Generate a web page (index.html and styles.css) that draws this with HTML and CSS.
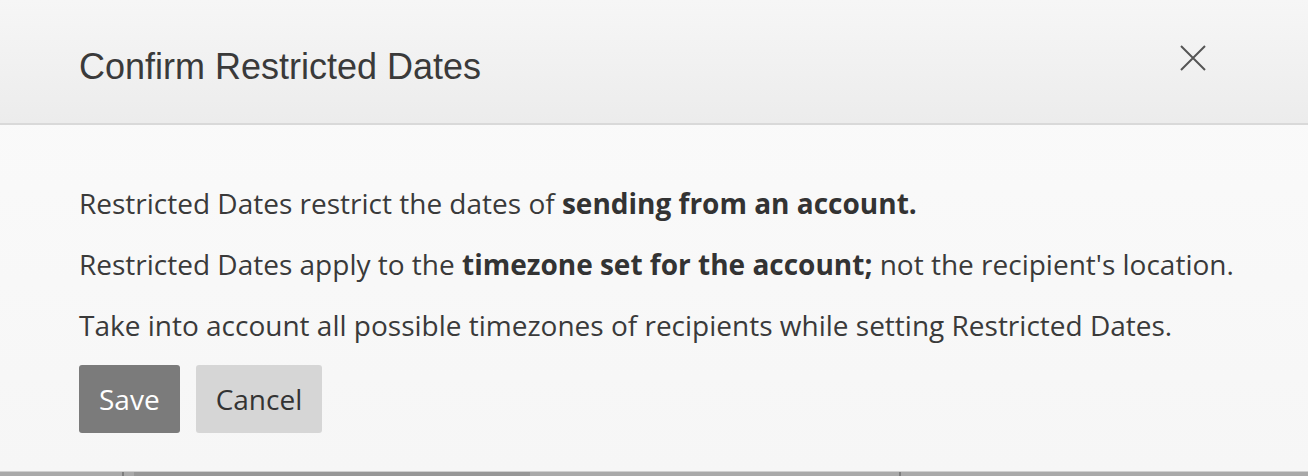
FILE: index.html
```html
<!DOCTYPE html>
<html lang="en">
<head>
  <meta charset="UTF-8" />
  <meta name="viewport" content="width=device-width, initial-scale=1" />
  <title>Confirm Restricted Dates</title>
  <link rel="stylesheet" href="styles.css">
</head>
<body>

  <div class="modal">
    <div class="modal-header">
      <h2 class="modal-title">Confirm Restricted Dates</h2>
      <button class="close-btn" aria-label="Close">
        <svg width="26" height="26" viewBox="0 0 26 26">
          <path d="M1 1 L25 25 M25 1 L1 25" stroke="#555" stroke-width="2" fill="none" />
        </svg>
      </button>
    </div>

    <div class="modal-body">
      <p>Restricted Dates restrict the dates of <strong>sending from an account.</strong></p>
      <p>Restricted Dates apply to the <strong>timezone set for the account;</strong> not the recipient's location.</p>
      <p>Take into account all possible timezones of recipients while setting Restricted Dates.</p>

      <div class="actions">
        <button class="btn btn-save">Save</button>
        <button class="btn btn-cancel">Cancel</button>
      </div>
    </div>
  </div>

  <!-- page behind the dialog -->
  <div class="backdrop">
    <span class="tick tick-a"></span>
    <span class="bar"></span>
    <span class="tick tick-b"></span>
  </div>

</body>
</html>
```

FILE: styles.css
```css
body {
  margin: 0;
  font-family: "Open Sans", sans-serif;
  background: #a9a9a9;
  color: #333;
}

.modal {
  background: linear-gradient(#fbfbfb, #f6f6f6);
  border-bottom: 1px solid #cfcfcf;
}

.modal-header {
  display: flex;
  justify-content: space-between;
  align-items: center;
  height: 123px;
  padding: 0 102px 0 79px;
  background: linear-gradient(#f6f6f6, #ececec);
  border-bottom: 2px solid #d9d9d9;
}

.modal-title {
  margin: 10px 0 0;
  font-family: "Liberation Sans", Arial, sans-serif;
  font-size: 36px;
  font-weight: normal;
  color: #3a3a3a;
}

.close-btn {
  background: none;
  border: none;
  padding: 0;
  margin-bottom: 8px;
  cursor: pointer;
  line-height: 0;
}

.modal-body {
  padding: 59px 30px 38px 79px;
}

.modal-body p {
  margin: 0 0 23px;
  font-size: 28px;
  line-height: 38px;
  color: #3a3a3a;
}

.modal-body strong {
  font-weight: 700;
  color: #333;
}

.actions {
  display: flex;
  gap: 16px;
  margin-top: -2px;
}

.btn {
  font-family: "Open Sans", sans-serif;
  font-size: 28px;
  height: 68px;
  padding: 0 20px;
  border: none;
  border-radius: 3px;
  cursor: pointer;
}

.btn-save {
  background: #7b7b7b;
  color: #fff;
}

.btn-cancel {
  background: #d6d6d6;
  color: #333;
}

.backdrop {
  display: flex;
  align-items: flex-start;
  height: 8px;
  padding-left: 122px;
}

.tick {
  width: 2px;
  height: 8px;
  background: #7e7e7e;
}

.bar {
  width: 396px;
  height: 8px;
  margin-left: 10px;
  background: #979797;
}

.tick-b {
  margin-left: 369px;
}
```
